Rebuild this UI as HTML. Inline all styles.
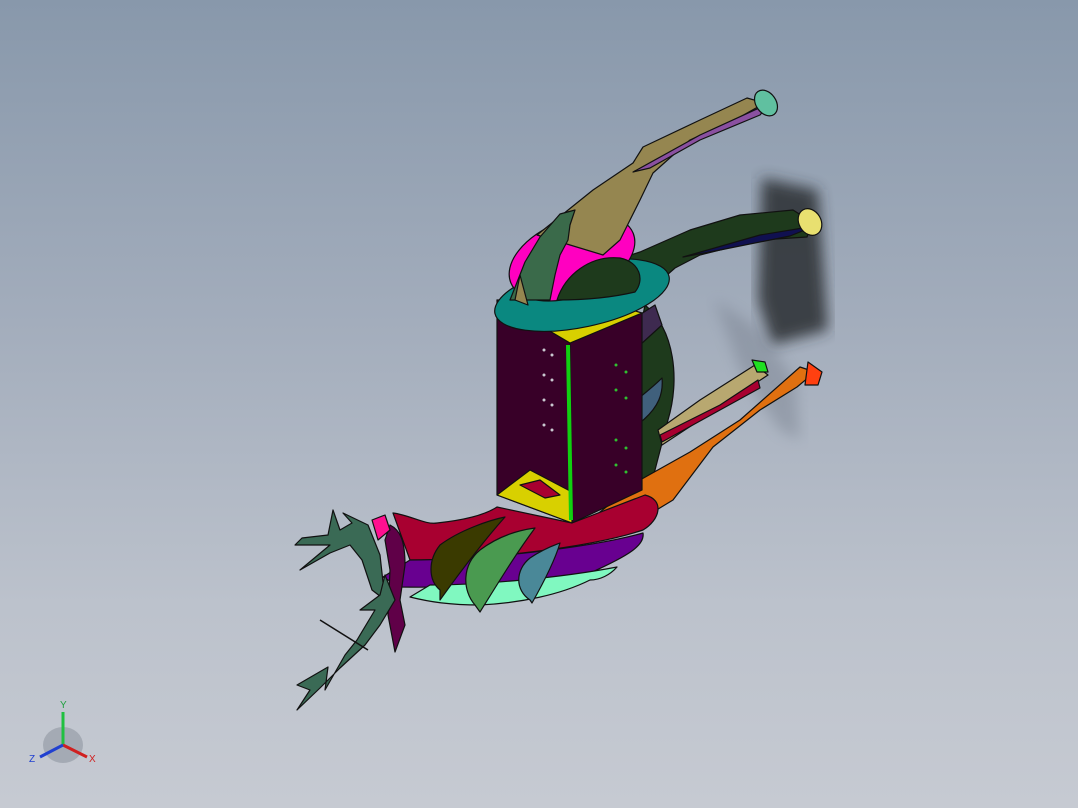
<!DOCTYPE html>
<html><head><style>
html,body{margin:0;padding:0}
body{width:1078px;height:808px;overflow:hidden;background:linear-gradient(180deg,#8898ab 0%,#a3adbc 40%,#bcc2cc 75%,#c6cad2 100%)}
svg{position:absolute;left:0;top:0}
</style></head><body>
<svg width="1078" height="808" viewBox="0 0 1078 808">
<defs><filter id="b"><feGaussianBlur stdDeviation="7"/></filter></defs>
<path d="M762 178 L818 190 L828 330 L772 345 L758 300 Z" fill="#2a2d33" filter="url(#b)" opacity="0.85"/>
<path d="M715 300 L760 330 L795 380 L800 440 L780 430 L740 370 Z" fill="#6a7280" filter="url(#b)" opacity="0.35"/>
<g stroke="#111" stroke-width="1.2" stroke-linejoin="round">
<!-- dark green leg -->
<path d="M600 265 L640 252 L690 230 L740 215 L793 210 L812 222 L807 237 L760 240 L700 255 L675 268 L650 290 Z" fill="#1e3a1c"/>
<path d="M683 257 L760 235 L815 226 L790 236 L720 250 Z" fill="#101050"/>
<ellipse cx="810" cy="222" rx="11" ry="14" fill="#e8e070" transform="rotate(-30 810 222)"/>
<!-- neck dark green -->
<path d="M645 305 C675 330 680 380 668 420 L655 470 L647 497 L635 490 L640 330 Z" fill="#1e3a1c"/>
<path d="M600 340 L655 305 L662 325 L640 345 Z" fill="#3e2a50"/>
<path d="M575 455 C600 425 640 400 662 378 C665 410 640 430 575 457 Z" fill="#40607c"/>
<!-- lower legs -->
<path d="M658 430 L700 400 L755 365 L768 375 L700 420 L662 445 Z" fill="#b8a870"/>
<path d="M660 435 L720 405 L758 380 L760 388 L720 410 L662 442 Z" fill="#a80030"/>
<path d="M590 520 L640 480 L690 452 L740 420 L800 367 L815 372 L797 387 L760 410 L713 447 L673 500 L640 520 Z" fill="#e07010"/>
<path d="M808 362 L822 372 L818 385 L805 385 Z" fill="#ff4010"/>
<path d="M752 360 L765 362 L768 372 L757 372 Z" fill="#20e020"/>
<!-- box -->
<path d="M497 300 L570 343 L572 523 L497 495 Z" fill="#380028"/>
<path d="M570 343 L642 313 L642 490 L572 523 Z" fill="#380028"/>
<path d="M497 300 L570 343 L642 313 L600 300 Z" fill="#d8d000"/>
<path d="M497 495 L530 470 L572 492 L572 523 Z" fill="#d8d000"/>
<path d="M520 485 L540 480 L560 495 L545 498 Z" fill="#a80030"/>
<line x1="568" y1="345" x2="571" y2="520" stroke="#10d010" stroke-width="4"/>
<!-- teal disc -->
<ellipse cx="582" cy="295" rx="89" ry="32" fill="#0a8880" transform="rotate(-12 582 295)"/>
<ellipse cx="572" cy="258" rx="66" ry="38" fill="#ff00c0" transform="rotate(-22 572 258)"/>
<!-- upper leg tan -->
<path d="M537 235 L593 190 L633 163 L643 147 L700 120 L747 98 L765 103 L740 117 L690 140 L653 173 L640 200 L620 240 L603 255 Z" fill="#958650"/>
<path d="M633 172 L700 135 L770 103 L760 115 L700 140 L650 168 Z" fill="#8a50a0"/>
<ellipse cx="766" cy="103" rx="10" ry="14" fill="#60c0a0" transform="rotate(-35 766 103)"/>
<path d="M557 300 C565 275 590 255 620 258 C640 262 645 280 635 292 C610 298 580 300 557 300 Z" fill="#1e3a1c"/>
<path d="M510 300 L525 262 L540 237 L560 214 L575 210 L570 225 L568 240 L560 255 L555 275 L550 300 Z" fill="#3a6a4a"/>
<path d="M515 300 L520 275 L528 305 Z" fill="#958650"/>
<!-- body -->
<path d="M393 513 C410 515 425 525 437 523 C465 520 485 515 497 507 L572 523 L645 495 C665 500 660 520 643 530 C590 548 480 560 410 560 Z" fill="#a80030"/>
<path d="M383 577 L410 560 C480 560 590 548 643 533 C645 545 630 555 590 573 C520 585 450 588 400 587 Z" fill="#680090"/>
<path d="M410 597 L430 585 C480 585 560 578 617 567 C610 575 600 580 590 580 C560 595 520 603 480 605 C450 605 430 602 410 597 Z" fill="#80f8c0"/>
<path d="M440 590 C428 580 428 560 440 545 C460 530 490 520 505 517 C480 545 458 575 440 600 Z" fill="#3a3a00"/>
<path d="M475 605 C462 590 462 565 480 550 C500 535 520 530 535 528 C515 555 500 580 480 612 Z" fill="#4a9a50"/>
<path d="M530 600 C515 590 515 570 530 558 C545 548 555 545 560 543 C555 560 545 580 532 603 Z" fill="#4a8898"/>
<path d="M390 525 C400 530 405 540 405 565 L400 600 L405 625 L395 652 L388 615 L390 570 L385 540 Z" fill="#600048"/>
<path d="M372 520 L385 515 L390 530 L378 540 Z" fill="#ff1090"/>
<g fill="#3a6a55">
<path d="M380 555 L368 525 L343 513 L352 523 L340 530 L333 510 L328 535 L302 538 L295 545 L330 545 L300 570 L330 553 L350 545 L362 560 L372 590 L385 600 Z"/>
<path d="M385 575 L395 600 L380 625 L365 645 L340 668 L320 688 L297 710 L310 690 L297 685 L328 667 L325 690 L345 655 L357 640 L375 610 L360 610 L380 595 Z"/>
</g>
<line x1="320" y1="620" x2="368" y2="650" stroke="#111" stroke-width="1.5"/>
</g>
<g fill="#c8c8d0">
<circle cx="544" cy="350" r="1.5"/><circle cx="544" cy="375" r="1.5"/><circle cx="544" cy="400" r="1.5"/><circle cx="544" cy="425" r="1.5"/>
<circle cx="552" cy="355" r="1.5"/><circle cx="552" cy="380" r="1.5"/><circle cx="552" cy="405" r="1.5"/><circle cx="552" cy="430" r="1.5"/>
</g>
<g fill="#30c030">
<circle cx="616" cy="365" r="1.5"/><circle cx="616" cy="390" r="1.5"/><circle cx="616" cy="440" r="1.5"/><circle cx="616" cy="465" r="1.5"/>
<circle cx="626" cy="372" r="1.5"/><circle cx="626" cy="398" r="1.5"/><circle cx="626" cy="448" r="1.5"/><circle cx="626" cy="472" r="1.5"/>
</g>
<g>
<ellipse cx="63" cy="745" rx="20" ry="18" fill="#9ca2ac" opacity="0.8"/>
<line x1="63" y1="745" x2="63" y2="712" stroke="#20c040" stroke-width="3"/>
<line x1="63" y1="745" x2="87" y2="757" stroke="#d02020" stroke-width="3"/>
<line x1="63" y1="745" x2="40" y2="757" stroke="#2040d0" stroke-width="3"/>
<text x="60" y="708" font-family="Liberation Sans,sans-serif" font-size="10" fill="#20a040">Y</text>
<text x="89" y="762" font-family="Liberation Sans,sans-serif" font-size="10" fill="#d02020">X</text>
<text x="29" y="762" font-family="Liberation Sans,sans-serif" font-size="10" fill="#2040d0">Z</text>
</g>
</svg>
</body></html>
